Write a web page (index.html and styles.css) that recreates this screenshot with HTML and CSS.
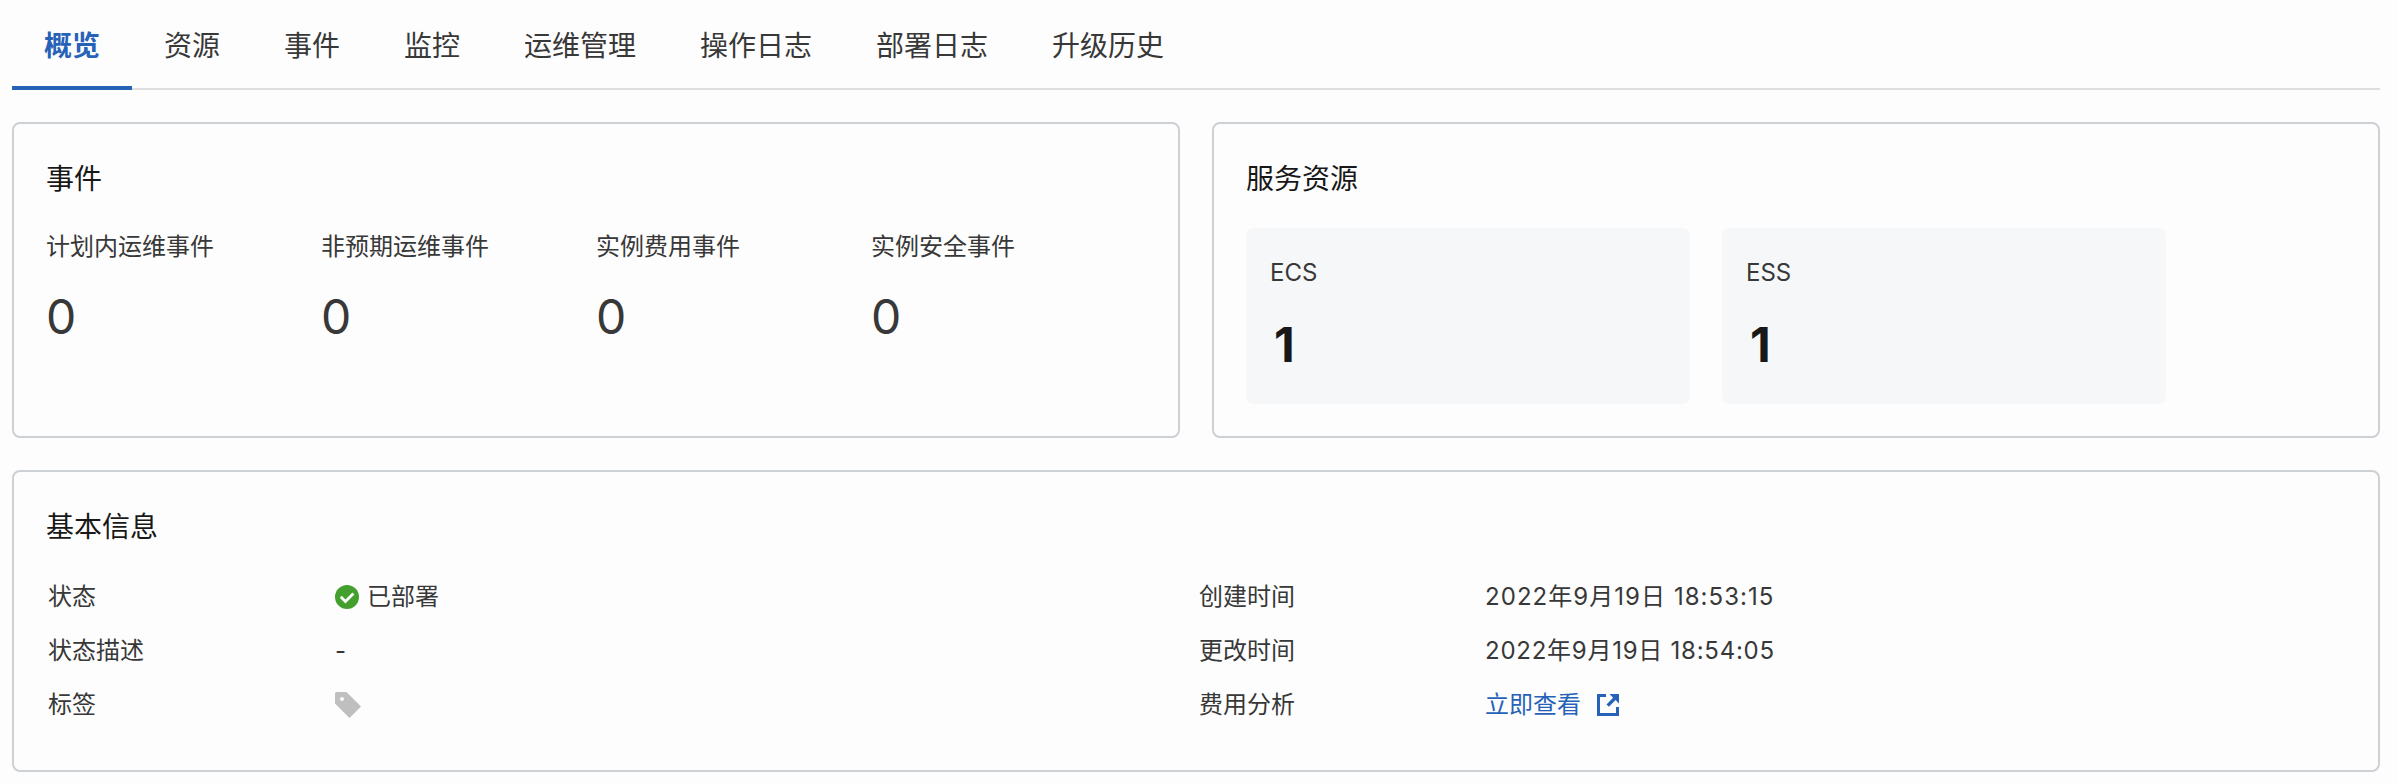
FILE: index.html
```html
<!DOCTYPE html>
<html lang="zh-CN">
<head>
<meta charset="utf-8">
<title>概览</title>
<link rel="stylesheet" href="styles.css">
</head>
<body>
<nav class="tabs">
  <a class="tab active">概览</a><a class="tab">资源</a><a class="tab">事件</a><a class="tab">监控</a><a class="tab">运维管理</a><a class="tab">操作日志</a><a class="tab">部署日志</a><a class="tab">升级历史</a>
</nav>
<main class="content">
  <div class="row">
    <section class="card">
      <h2 class="title">事件</h2>
      <div class="events">
        <div class="event"><span class="label">计划内运维事件</span><span class="count">0</span></div>
        <div class="event"><span class="label">非预期运维事件</span><span class="count">0</span></div>
        <div class="event"><span class="label">实例费用事件</span><span class="count">0</span></div>
        <div class="event"><span class="label">实例安全事件</span><span class="count">0</span></div>
      </div>
    </section>
    <section class="card">
      <h2 class="title">服务资源</h2>
      <div class="tiles">
        <div class="tile"><span class="tile-name">ECS</span><span class="tile-count">1</span></div>
        <div class="tile"><span class="tile-name">ESS</span><span class="tile-count">1</span></div>
      </div>
    </section>
  </div>
  <section class="card info">
    <h2 class="title">基本信息</h2>
    <dl class="fields">
      <dt>状态</dt>
      <dd><svg class="ok" viewBox="0 0 24 24"><circle cx="12" cy="12" r="12" fill="#43a02f"/><path d="M5.8 11.8l4.6 4.6 8-8" fill="none" stroke="#fff" stroke-width="2.8"/></svg>已部署</dd>
      <dt>创建时间</dt>
      <dd class="date created">2022年9月19日 18:53:15</dd>
      <dt>状态描述</dt>
      <dd>-</dd>
      <dt>更改时间</dt>
      <dd class="date updated">2022年9月19日 18:54:05</dd>
      <dt>标签</dt>
      <dd><svg class="tag" viewBox="0 0 26 26"><path fill="#bfbfbf" fill-rule="evenodd" d="M0 1.5Q0 0 1.5 0H11.5L26 14.5 14.5 26 0 11.5zM7 5a2 2 0 1 0 0 4 2 2 0 0 0 0-4z"/></svg></dd>
      <dt>费用分析</dt>
      <dd><a class="link">立即查看<svg class="ext" viewBox="0 0 22 22"><path d="M9 1.5H1.5v19h19V13" fill="none" stroke="#2762b9" stroke-width="3"/><path d="M12.5 0H22v9.5L18.6 6.1l-6.7 6.7-2.4-2.4 6.6-6.7z" fill="#2762b9"/></svg></a></dd>
    </dl>
  </section>
</main>
</body>
</html>
```
FILE: styles.css
```css
* { box-sizing: border-box; }
body {
  margin: 0;
  padding: 0 18px 0 12px;
  background: #fdfdfd;
  color: #383838;
  font: 24px/36px Inter, "Noto Sans CJK SC", sans-serif;
}
.tabs {
  display: flex;
  height: 90px;
  box-shadow: inset 0 -2px #dedede;
}
.tab {
  height: 90px;
  padding: 0 32px;
  font-size: 28px;
  line-height: 92px;
}
.tab.active {
  color: #2762b9;
  font-weight: 600;
  box-shadow: inset 0 -4px #2762b9;
}
.content {
  display: flex;
  flex-direction: column;
  gap: 32px;
  padding-top: 32px;
}
.row {
  display: grid;
  grid-template-columns: 1fr 1fr;
  gap: 32px;
}
.card {
  height: 316px;
  padding: 33px 32px 32px;
  border: 2px solid #cdd0d5;
  border-radius: 8px;
}
.info { height: 302px; }
.title {
  margin: 0;
  color: #181818;
  font-size: 28px;
  font-weight: 400;
  line-height: 44px;
}
.events {
  display: grid;
  grid-template-columns: repeat(4, 1fr);
  margin-top: 28px;
}
.event { display: flex; flex-direction: column; }
.count {
  margin-top: 24px;
  font-size: 48px;
  line-height: 56px;
}
.tiles {
  display: flex;
  gap: 32px;
  margin-top: 27px;
}
.tile {
  display: flex;
  flex-direction: column;
  width: 444px;
  height: 176px;
  padding: 27px 24px 24px;
  border-radius: 8px;
  background: #f6f7f9;
}
.tile-count {
  margin-top: 26px;
  padding-left: 4px;
  color: #181818;
  font-size: 48px;
  font-weight: 700;
  line-height: 56px;
}
.fields {
  display: grid;
  grid-template-columns: 287px 864px 286px 1fr;
  grid-auto-rows: 54px;
  align-items: center;
  margin: 21px 0 0 2px;
}
.fields dd {
  display: flex;
  align-items: center;
  margin: 0;
}
.created { letter-spacing: 1.05px; }
.updated { letter-spacing: 0.75px; }
.ok { width: 24px; height: 24px; margin-right: 8px; }
.tag { width: 26px; height: 26px; }
.link { display: flex; align-items: center; color: #2762b9; }
.ext { width: 22px; height: 22px; margin-left: 16px; }
```
